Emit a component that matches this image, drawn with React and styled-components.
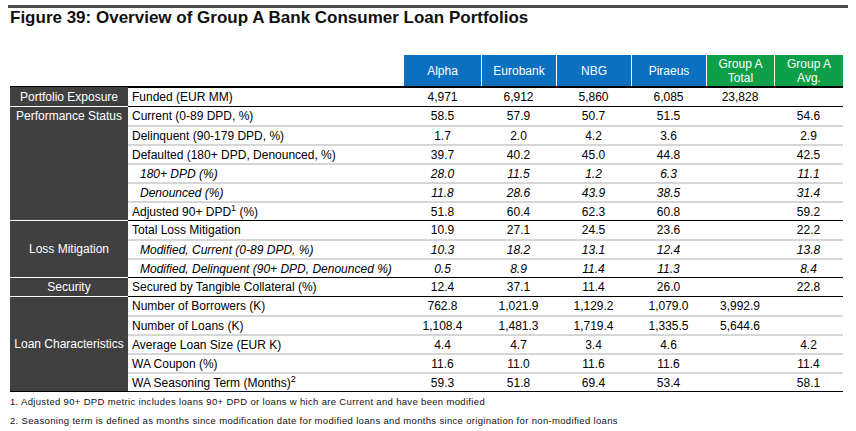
import React from 'react'
import styled, { createGlobalStyle } from 'styled-components'

const GlobalStyle = createGlobalStyle`
  body {
    margin: 0;
    background: #fff;
    font-family: "Liberation Sans", Arial, sans-serif;
    color: #000;
  }
`

const COLS = '77px 75px 75px 75px 68px 69px'

const Page = styled.main`
  padding: 5px 8px 0;
  width: 840px;
`

const TopBar = styled.div`
  height: 3px;
  background: #4b4b4b;
`

const Title = styled.h1`
  margin: 0 0 27px 2px;
  font-size: 17px;
  line-height: 20px;
  font-weight: bold;
  color: #111;
`

const Table = styled.section`
  margin-left: 2px;
  width: 833px;
  border-bottom: 1px solid #000;
`

const HeaderRow = styled.div`
  display: grid;
  grid-template-columns: 394px ${COLS};
  height: 31px;
  border-bottom: 1px solid #000;
`

const HeadCell = styled.div`
  background: ${p => (p.$tone === 'green' ? '#0e9f49' : '#0a70bf')};
  color: #fff;
  font-size: 12px;
  line-height: 14px;
  display: flex;
  align-items: center;
  justify-content: center;
  text-align: center;
  border-left: 1px solid #fff;
  &:nth-child(2) { border-left: none; }
`

const Group = styled.div`
  display: flex;
`

const GroupName = styled.div`
  width: 118px;
  flex-shrink: 0;
  box-sizing: border-box;
  background: #404040;
  color: #fff;
  font-size: 12px;
  display: flex;
  justify-content: center;
  align-items: ${p => (p.$top ? 'flex-start' : 'center')};
  padding-top: ${p => (p.$top ? '2px' : '0')};
  white-space: nowrap;
  ${Group} + ${Group} & {
    border-top: 1px solid #fff;
  }
`

const Rows = styled.div`
  flex: 1;
`

const Row = styled.div`
  display: grid;
  grid-template-columns: 276px ${COLS};
  height: 19px;
  box-sizing: border-box;
  border-top: 2px solid #d6d6d6;
  align-items: center;
  font-size: 12px;
  font-style: ${p => (p.$italic ? 'italic' : 'normal')};
  &:first-child {
    border-top: 1px solid #000;
  }
`

const Label = styled.div`
  padding-left: ${p => (p.$italic ? '12px' : '4px')};
  white-space: nowrap;
`

const Value = styled.div`
  text-align: center;
`

const Sup = styled.sup`
  font-size: 9px;
  line-height: 0;
`

const Notes = styled.div`
  margin-left: 2px;
  font-size: 9.5px;
  letter-spacing: 0.33px;
  line-height: 19px;
  color: #111;
  white-space: nowrap;
`

const groups = [
  {
    name: 'Portfolio Exposure',
    rows: [
      { label: 'Funded (EUR MM)', v: ['4,971', '6,912', '5,860', '6,085', '23,828', ''] },
    ],
  },
  {
    name: 'Performance Status',
    top: true,
    rows: [
      { label: 'Current (0-89 DPD, %)', v: ['58.5', '57.9', '50.7', '51.5', '', '54.6'] },
      { label: 'Delinquent (90-179 DPD, %)', v: ['1.7', '2.0', '4.2', '3.6', '', '2.9'] },
      { label: 'Defaulted (180+ DPD, Denounced, %)', v: ['39.7', '40.2', '45.0', '44.8', '', '42.5'] },
      { label: '180+ DPD (%)', italic: true, v: ['28.0', '11.5', '1.2', '6.3', '', '11.1'] },
      { label: 'Denounced (%)', italic: true, v: ['11.8', '28.6', '43.9', '38.5', '', '31.4'] },
      { label: 'Adjusted 90+ DPD', sup: '1', after: ' (%)', v: ['51.8', '60.4', '62.3', '60.8', '', '59.2'] },
    ],
  },
  {
    name: 'Loss Mitigation',
    rows: [
      { label: 'Total Loss Mitigation', v: ['10.9', '27.1', '24.5', '23.6', '', '22.2'] },
      { label: 'Modified, Current (0-89 DPD, %)', italic: true, v: ['10.3', '18.2', '13.1', '12.4', '', '13.8'] },
      { label: 'Modified, Delinquent (90+ DPD, Denounced %)', italic: true, v: ['0.5', '8.9', '11.4', '11.3', '', '8.4'] },
    ],
  },
  {
    name: 'Security',
    rows: [
      { label: 'Secured by Tangible Collateral (%)', v: ['12.4', '37.1', '11.4', '26.0', '', '22.8'] },
    ],
  },
  {
    name: 'Loan Characteristics',
    rows: [
      { label: 'Number of Borrowers (K)', v: ['762.8', '1,021.9', '1,129.2', '1,079.0', '3,992.9', ''] },
      { label: 'Number of Loans (K)', v: ['1,108.4', '1,481.3', '1,719.4', '1,335.5', '5,644.6', ''] },
      { label: 'Average Loan Size (EUR K)', v: ['4.4', '4.7', '3.4', '4.6', '', '4.2'] },
      { label: 'WA Coupon (%)', v: ['11.6', '11.0', '11.6', '11.6', '', '11.4'] },
      { label: 'WA Seasoning Term (Months)', sup: '2', after: '', v: ['59.3', '51.8', '69.4', '53.4', '', '58.1'] },
    ],
  },
]

const heads = [
  { t: 'Alpha' },
  { t: 'Eurobank' },
  { t: 'NBG' },
  { t: 'Piraeus' },
  { t: ['Group A', 'Total'], tone: 'green' },
  { t: ['Group A', 'Avg.'], tone: 'green' },
]

const App = () => {
  return (
    <Page>
      <GlobalStyle />
      <TopBar />
      <Title>Figure 39: Overview of Group A Bank Consumer Loan Portfolios</Title>

      <Table>
        <HeaderRow>
          <div />
          {heads.map((h, i) => (
            <HeadCell key={i} $tone={h.tone}>
              {Array.isArray(h.t) ? <span>{h.t[0]}<br />{h.t[1]}</span> : h.t}
            </HeadCell>
          ))}
        </HeaderRow>

        {groups.map(g => (
          <Group key={g.name}>
            <GroupName $top={g.top}>{g.name}</GroupName>
            <Rows>
              {g.rows.map(r => (
                <Row key={r.label} $italic={r.italic}>
                  <Label $italic={r.italic}>
                    {r.label}
                    {r.sup && <Sup>{r.sup}</Sup>}
                    {r.after}
                  </Label>
                  {r.v.map((val, i) => <Value key={i}>{val}</Value>)}
                </Row>
              ))}
            </Rows>
          </Group>
        ))}
      </Table>

      <Notes>
        <div>1. Adjusted 90+ DPD metric includes loans 90+ DPD or loans w hich are Current and have been modified</div>
        <div>2. Seasoning term is defined as months since modification date for modified loans and months since origination for non-modified loans</div>
      </Notes>
    </Page>
  )
}

export default App
